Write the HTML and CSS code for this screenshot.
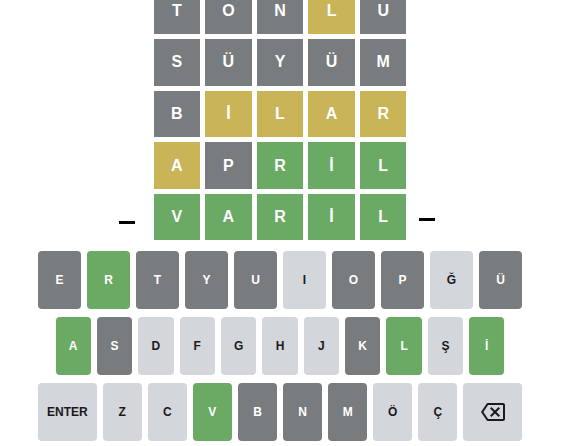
FILE: index.html
```html
<!DOCTYPE html>
<html lang="tr">
<head>
<meta charset="utf-8">
<title>Wordle TR</title>
<link rel="stylesheet" href="styles.css">
</head>
<body>
<main class="game">
  <div class="board">
    <div class="row">
      <div class="tile absent">T</div><div class="tile absent">O</div><div class="tile absent">N</div><div class="tile present">L</div><div class="tile absent">U</div>
    </div>
    <div class="row">
      <div class="tile absent">S</div><div class="tile absent">Ü</div><div class="tile absent">Y</div><div class="tile absent">Ü</div><div class="tile absent">M</div>
    </div>
    <div class="row">
      <div class="tile absent">B</div><div class="tile present">İ</div><div class="tile present">L</div><div class="tile present">A</div><div class="tile present">R</div>
    </div>
    <div class="row">
      <div class="tile present">A</div><div class="tile absent">P</div><div class="tile correct">R</div><div class="tile correct">İ</div><div class="tile correct">L</div>
    </div>
    <div class="row current">
      <span class="dash dash-left"></span>
      <div class="tile correct">V</div><div class="tile correct">A</div><div class="tile correct">R</div><div class="tile correct">İ</div><div class="tile correct">L</div>
      <span class="dash dash-right"></span>
    </div>
  </div>

  <div class="keyboard">
    <div class="krow">
      <button class="key k-absent">E</button>
      <button class="key k-correct">R</button>
      <button class="key k-absent">T</button>
      <button class="key k-absent">Y</button>
      <button class="key k-absent">U</button>
      <button class="key">I</button>
      <button class="key k-absent">O</button>
      <button class="key k-absent">P</button>
      <button class="key">Ğ</button>
      <button class="key k-absent">Ü</button>
    </div>
    <div class="krow krow-mid">
      <button class="key k-correct">A</button>
      <button class="key k-absent">S</button>
      <button class="key">D</button>
      <button class="key">F</button>
      <button class="key">G</button>
      <button class="key">H</button>
      <button class="key">J</button>
      <button class="key k-absent">K</button>
      <button class="key k-correct">L</button>
      <button class="key">Ş</button>
      <button class="key k-correct">İ</button>
    </div>
    <div class="krow">
      <button class="key wide">ENTER</button>
      <button class="key">Z</button>
      <button class="key">C</button>
      <button class="key k-correct">V</button>
      <button class="key k-absent">B</button>
      <button class="key k-absent">N</button>
      <button class="key k-absent">M</button>
      <button class="key">Ö</button>
      <button class="key">Ç</button>
      <button class="key wide" aria-label="Sil">
        <svg class="bksp" viewBox="0 0 24 24" width="24" height="24" aria-hidden="true"><path fill="#1a1a1b" d="M22 3H7c-.69 0-1.23.35-1.59.88L0 12l5.41 8.11c.36.53.9.89 1.59.89h15c1.1 0 2-.9 2-2V5c0-1.1-.9-2-2-2zm0 16H7.07L2.4 12l4.66-7H22v14zm-11.59-2L14 13.41 17.59 17 19 15.59 15.41 12 19 8.41 17.59 7 14 10.59 10.41 7 9 8.41 12.59 12 9 15.59z"/></svg>
      </button>
    </div>
  </div>
</main>
</body>
</html>
```
FILE: styles.css
```css
* { box-sizing: border-box; }

html, body {
  margin: 0;
  padding: 0;
  background: #ffffff;
  overflow: hidden;
}

body {
  font-family: "Liberation Sans", Arial, sans-serif;
  color: #1a1a1b;
}

.game {
  width: 560px;
  display: flex;
  flex-direction: column;
  align-items: center;
}

.board {
  margin-top: -12.5px;
  width: 253px;
  display: flex;
  flex-direction: column;
  gap: 5px;
}

.row {
  display: grid;
  grid-template-columns: repeat(5, 1fr);
  gap: 5px;
  position: relative;
}

.tile {
  height: 46.6px;
  display: flex;
  align-items: center;
  justify-content: center;
  color: #ffffff;
  font-weight: 700;
  font-size: 16px;
  line-height: 1;
}

.absent { background: #787c7e; }
.present { background: #c9b458; }
.correct { background: #6aaa64; }

.dash {
  position: absolute;
  width: 16px;
  height: 3px;
  background: #000000;
}
.dash-left { left: -34.5px; top: 27px; }
.dash-right { right: -28.5px; top: 24px; }

.keyboard {
  margin-top: 11px;
  width: 484px;
  display: flex;
  flex-direction: column;
  gap: 8px;
}

.krow {
  display: flex;
  gap: 6px;
}

.krow-mid {
  padding: 0 17.5px;
}

.key {
  flex: 1 1 0;
  min-width: 0;
  height: 58px;
  border: 0;
  border-radius: 4px;
  padding: 0;
  margin: 0;
  background: #d3d6da;
  color: #1a1a1b;
  font-family: "Liberation Sans", Arial, sans-serif;
  font-weight: 700;
  font-size: 12px;
  display: flex;
  align-items: center;
  justify-content: center;
  cursor: pointer;
}

.key.wide { flex: 1.5 1 0; }

.k-absent { background: #787c7e; color: #ffffff; }
.k-correct { background: #6aaa64; color: #ffffff; }

.bksp { display: block; }
```
